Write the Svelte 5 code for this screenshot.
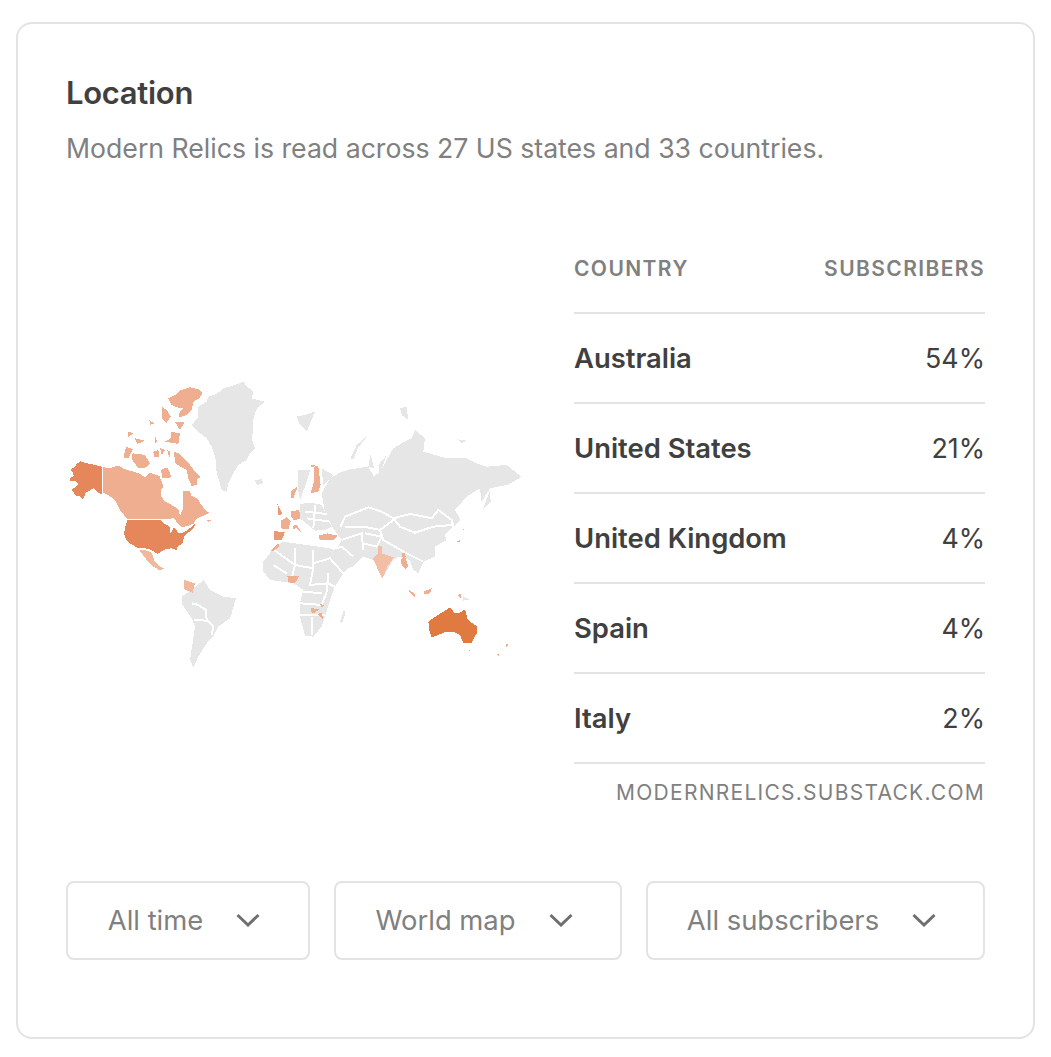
<script>
  const rows = [
    ['Australia', '54%'],
    ['United States', '21%'],
    ['United Kingdom', '4%'],
    ['Spain', '4%'],
    ['Italy', '2%']
  ];
  const filters = [
    ['All time', 244],
    ['World map', 288],
    ['All subscribers', 339]
  ];
  // Shapes are traced in 3x coordinates, one set per hemisphere
  const west = [
    ['g', 'M445 110 L470 95 L475 80 L500 72 L520 55 L555 45 L580 35 L590 48 L610 65 L605 85 L625 90 L645 95 L625 110 L615 130 L608 155 L610 180 L605 205 L615 235 L600 250 L590 270 L565 285 L550 310 L535 340 L530 365 L515 360 L508 335 L500 310 L498 270 L485 230 L470 205 L450 190 L425 165 L445 140 Z'],
    ['g', 'M615 332 L635 326 L640 338 L622 345 Z'],
    ['g', 'M395 680 L410 670 L430 655 L462 630 L480 660 L520 680 L558 685 L548 720 L540 745 L505 770 L490 800 L470 820 L445 860 L430 893 L420 870 L428 820 L435 770 L425 745 L395 700 Z'],
    ['w', 'M425 700 L445 705 L468 720 L470 750 L490 770 L485 795'],
    ['w', 'M432 750 L470 752'],
    ['m', 'M403 630 L435 640 L428 668 L403 658 Z'],
    ['c', 'M158 292 L180 294 L205 287 L225 298 L250 305 L270 312 L285 322 L300 308 L328 318 L338 342 L340 350 L332 362 L332 378 L345 395 L365 405 L385 418 L390 437 L398 420 L400 362 L418 362 L425 378 L445 388 L452 402 L470 425 L478 428 L462 436 L440 445 L432 460 L418 466 L395 472 L385 462 L372 445 L345 447 L232 447 L210 420 L195 390 L170 372 L158 368 Z'],
    ['c', 'M355 85 L375 75 L390 62 L420 52 L445 58 L458 68 L448 85 L430 95 L425 120 L410 135 L395 140 L385 142 L390 125 L400 115 L380 112 L365 105 Z'],
    ['c', 'M335 110 L350 120 L362 140 L350 158 L335 145 Z'],
    ['c', 'M375 155 L405 155 L390 180 Z'],
    ['c', 'M362 185 L390 190 L385 222 L345 215 L362 205 Z'],
    ['c', 'M228 230 L248 238 L235 265 L220 262 Z'],
    ['c', 'M248 250 L265 252 L285 255 L300 280 L290 292 L265 295 L255 280 L245 268 Z'],
    ['c', 'M310 245 L325 240 L328 262 L312 260 Z'],
    ['c', 'M372 245 L385 250 L400 265 L420 285 L435 305 L452 320 L440 330 L442 345 L425 348 L415 325 L410 300 L390 290 L375 278 Z'],
    ['c', 'M333 300 L352 292 L365 322 L338 325 Z'],
    ['c', 'M255 205 L285 212 L262 222 Z'],
    ['c', 'M235 185 L250 190 L235 200 Z'],
    ['c', 'M298 150 L312 160 L300 165 Z'],
    ['c', 'M330 235 L345 240 L335 255 Z'],
    ['c', 'M352 240 L362 245 L358 265 Z'],
    ['c', 'M316 200 L322 215 L316 218 Z'],
    ['u', 'M62 298 L75 290 L80 282 L92 274 L110 280 L130 284 L155 290 L155 372 L145 368 L130 355 L118 362 L105 370 L103 382 L97 388 L88 378 L78 378 L65 358 L75 352 L85 342 L75 332 L60 332 L62 322 L72 318 L68 308 Z'],
    ['u', 'M232 450 L330 450 L345 462 L358 468 L362 490 L372 472 L385 488 L395 490 L410 482 L425 470 L438 460 L430 476 L415 488 L402 498 L398 520 L382 530 L382 542 L365 535 L345 538 L322 552 L305 540 L285 535 L262 533 L240 520 L228 510 L222 490 L226 470 Z'],
    ['m', 'M268 540 L285 540 L305 548 L312 570 L330 590 L345 597 L328 600 L310 590 L290 570 Z'],
    ['c', 'M470 448 L486 452 L475 455 Z']
  ];
  const east = [
    ['g', 'M215 370 L240 325 L270 308 L300 298 L355 290 L372 320 L395 300 L410 270 L430 235 L455 220 L485 205 L495 180 L525 205 L520 245 L555 255 L590 265 L650 265 L680 280 L710 290 L770 285 L795 305 L815 320 L790 335 L770 345 L720 355 L695 395 L690 355 L650 380 L615 420 L632 450 L610 470 L585 495 L590 510 L555 530 L555 560 L520 575 L505 610 L490 600 L480 570 L445 560 L430 570 L397 625 L370 570 L340 560 L310 590 L270 600 L240 540 L265 530 L275 510 L250 475 L225 430 Z'],
    ['w', 'M272 470 L285 440 L355 412 L395 425 L430 445 L480 432 L545 445 L565 420 L605 450 L610 470'],
    ['w', 'M430 445 L450 470 L495 488 L550 470 L605 465'],
    ['w', 'M430 450 L390 480 L400 510 L470 550 L520 575'],
    ['w', 'M285 470 L340 470 L390 480'],
    ['w', 'M275 510 L335 490 L340 540 M345 490 L395 500 L380 530 L340 520 M240 540 L275 530 L310 560'],
    ['g', 'M150 402 L185 398 L215 405 L245 470 L225 480 L195 482 L150 445 Z'],
    ['w', 'M165 425 L230 432 M170 445 L240 455 M195 405 L190 475'],
    ['g', 'M145 300 L180 300 L172 330 L150 390 L143 350 Z'],
    ['g', 'M215 295 L250 315 L220 345 Z'],
    ['g', 'M140 140 L165 135 L195 125 L170 185 L150 165 Z'],
    ['g', 'M18 333 L35 326 L38 340 L20 345 Z'],
    ['g', 'M302 265 L320 225 L355 195 L325 232 L310 270 Z'],
    ['g', 'M355 290 L362 252 L372 295 Z'],
    ['g', 'M385 285 L410 255 L390 315 Z'],
    ['g', 'M450 115 L470 110 L475 150 L455 135 Z'],
    ['g', 'M625 208 L650 212 L635 220 Z'],
    ['g', 'M698 420 L720 360 L722 395 Z'],
    ['g', 'M640 680 L660 688 L640 692 Z'],
    ['g', 'M40 575 L75 530 L100 515 L135 520 L240 535 L265 545 L305 585 L280 610 L255 650 L240 690 L225 740 L215 770 L190 800 L165 798 L150 740 L150 700 L160 660 L130 640 L60 630 L40 605 Z'],
    ['w', 'M72 540 L135 585 L125 625 M135 535 L135 585 L190 595 L190 540 M190 580 L240 565 L280 610 M190 595 L180 645 L235 640 L255 650 M235 610 L230 665 L215 705 L150 700 M70 585 L110 610 M160 665 L215 670 M150 735 L225 735 M185 740 L185 795'],
    ['g', 'M270 755 L282 720 L286 730 L276 760 Z'],
    ['s', 'M72 483 L105 487 L95 510 L72 510 Z'],
    ['c', 'M92 452 L110 442 L122 455 L115 478 L92 475 Z'],
    ['c', 'M124 424 L148 420 L150 445 L132 452 L124 440 Z'],
    ['s', 'M82 402 L88 412 L97 433 L85 435 L85 415 Z'],
    ['c', 'M128 467 L140 465 L156 490 L140 475 L130 476 Z'],
    ['c', 'M62 542 L85 520 L88 530 L68 544 Z'],
    ['c', 'M124 362 L143 350 L130 385 L122 385 Z'],
    ['c', 'M192 290 L205 288 L212 345 L205 365 L182 370 L192 335 Z'],
    ['c', 'M178 288 L195 284 L190 293 Z'],
    ['c', 'M205 497 L232 490 L262 497 L250 510 L210 511 Z'],
    ['l', 'M368 565 L385 550 L385 527 L395 528 L395 550 L432 562 L412 590 L397 627 L380 590 Z'],
    ['c', 'M455 565 L465 560 L475 590 L465 597 L452 580 Z'],
    ['c', 'M455 550 L465 548 L467 560 L458 562 Z'],
    ['c', 'M475 657 L497 675 L494 681 L478 665 Z'],
    ['c', 'M520 665 L545 655 L540 670 L525 673 Z'],
    ['c', 'M622 675 L632 672 L634 686 Z'],
    ['c', 'M112 617 L148 617 L135 640 L115 637 Z'],
    ['c', 'M183 714 L208 718 L195 728 L185 728 Z'],
    ['c', 'M203 732 L217 728 L218 746 Z'],
    ['c', 'M210 702 L222 706 L216 714 Z'],
    ['c', 'M620 514 L632 510 L628 518 Z'],
    ['c', 'M640 476 L645 480 L641 482 Z'],
    ['a', 'M535 755 L560 738 L580 725 L600 712 L615 730 L628 730 L645 718 L652 745 L660 755 L680 768 L680 790 L665 818 L640 818 L630 795 L610 785 L590 785 L565 795 L545 803 L538 780 Z'],
    ['c', 'M742 852 L750 854 L744 860 Z'],
    ['c', 'M768 822 L775 824 L770 832 Z'],
    ['c', 'M656 840 L662 840 L658 844 Z']
  ];
</script>

<div class="card">
  <h2>Location</h2>
  <p class="lede">Modern Relics is read across 27 US states and 33 countries.</p>

  <div class="body">
    <svg class="map" viewBox="66 370 460 310" role="img" aria-label="World map of subscribers">
      <g transform="translate(50 370) scale(0.3333)">
        {#each west as [tone, d]}<path class={tone} {d} />{/each}
      </g>
      <g transform="translate(250 370) scale(0.3333)">
        {#each east as [tone, d]}<path class={tone} {d} />{/each}
      </g>
    </svg>

    <div class="table">
      <div class="head"><span>COUNTRY</span><span>SUBSCRIBERS</span></div>
      {#each rows as [name, pct]}
        <div class="row"><strong>{name}</strong><span>{pct}</span></div>
      {/each}
      <div class="source">MODERNRELICS.SUBSTACK.COM</div>
    </div>
  </div>

  <div class="filters">
    {#each filters as [label, w]}
      <button style="width:{w}px">
        {label}
        <svg viewBox="0 0 24 14" width="24" height="14" aria-hidden="true"><path d="M1.5 2 L12 12 L22.5 2" /></svg>
      </button>
    {/each}
  </div>
</div>

<style>
  :global(body) { margin: 0; background: #fff; }
  .card {
    box-sizing: border-box;
    width: 1019px;
    height: 1017px;
    margin: 22px 0 0 16px;
    padding: 50px 48px 0;
    border: 2px solid #e3e3e3;
    border-radius: 16px;
    font-family: Inter, "Liberation Sans", sans-serif;
    color: #404040;
  }
  h2 {
    margin: 0;
    font-size: 31px;
    line-height: 38px;
    font-weight: 600;
    letter-spacing: -0.3px;
  }
  .lede {
    margin: 18px 0 0;
    font-size: 26.65px;
    line-height: 36px;
    color: #808080;
  }
  .body {
    display: flex;
    justify-content: space-between;
    align-items: flex-start;
    margin-top: 67px;
  }
  .map { width: 460px; height: 310px; margin-top: 137px; display: block; }
  .map path { stroke: none; shape-rendering: crispEdges; }
  .map .g { fill: #e6e6e6; }
  .map .c { fill: #efae8f; }
  .map .l { fill: #f2bea5; }
  .map .m { fill: #f2b89c; }
  .map .s { fill: #ea9a73; }
  .map .u { fill: #e5875a; }
  .map .a { fill: #e07a40; }
  .map .w { fill: none; stroke: #fff; stroke-width: 6; }
  .table { width: 411px; }
  .head {
    display: flex;
    justify-content: space-between;
    align-items: center;
    height: 81px;
    padding-bottom: 8px;
    border-bottom: 2px solid #e3e3e3;
    box-sizing: border-box;
    font-size: 21px;
    font-weight: 600;
    letter-spacing: 1.4px;
    color: #808080;
  }
  .row {
    display: flex;
    justify-content: space-between;
    align-items: center;
    height: 90px;
    box-sizing: border-box;
    border-bottom: 2px solid #e3e3e3;
    font-size: 26.8px;
  }
  .row strong { font-weight: 600; font-size: 27.4px; }
  .source {
    margin-top: 15px;
    text-align: right;
    font-size: 21px;
    line-height: 28px;
    letter-spacing: 1.26px;
    color: #808080;
  }
  .filters {
    display: flex;
    gap: 24px;
    margin-top: 74px;
  }
  button {
    box-sizing: border-box;
    height: 79px;
    display: flex;
    align-items: center;
    justify-content: center;
    gap: 33px;
    padding: 0 8px 2px 0;
    background: #fff;
    border: 2px solid #e3e3e3;
    border-radius: 8px;
    font: 400 27.4px Inter, "Liberation Sans", sans-serif;
    color: #808080;
  }
  button svg { fill: none; stroke: #6f6f6f; stroke-width: 3; }
</style>
